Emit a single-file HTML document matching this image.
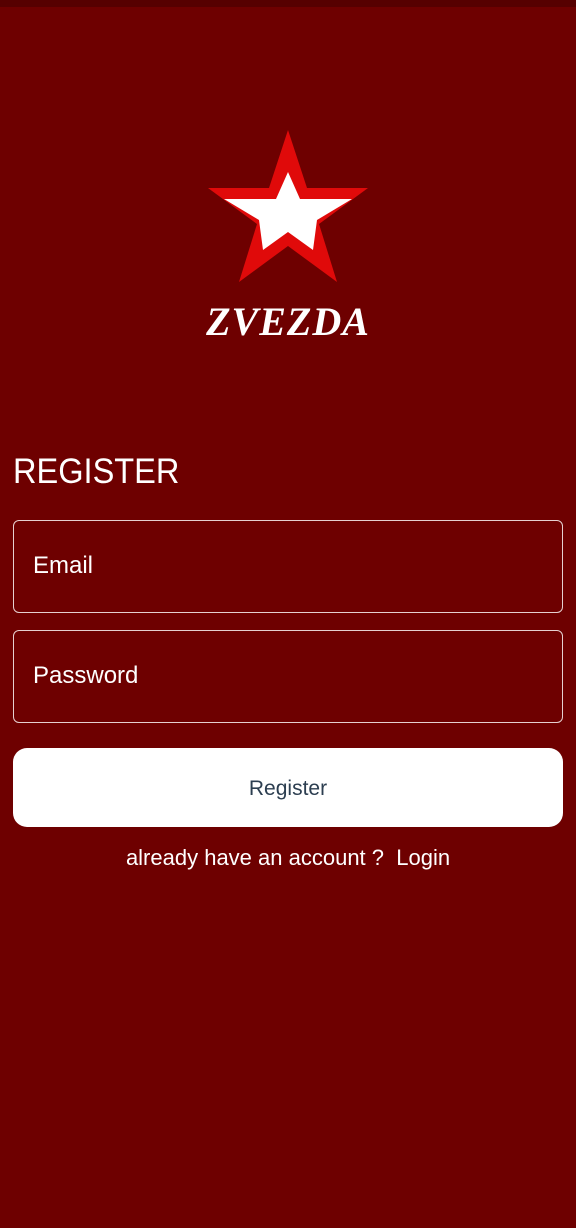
<!DOCTYPE html>
<html><head><meta charset="utf-8"><style>
html,body{margin:0;padding:0}
body{width:576px;height:1228px;background:#6e0000;position:relative;overflow:hidden;font-family:"Liberation Sans","DejaVu Sans",sans-serif;color:#fff}
.top{position:absolute;left:0;top:0;width:576px;height:7px;background:#560000}
.h{position:absolute;left:13px;top:452px;font-size:35px;transform:scaleX(0.93);transform-origin:left}
.in{position:absolute;left:13px;width:550px;border:1px solid #e6d0d0;border-radius:6px;box-sizing:border-box;font-size:24px;line-height:90px;padding-left:19px;height:93px}
.btn{position:absolute;left:13px;top:748px;width:550px;height:79px;background:#fff;border-radius:14px;color:#2c3e50;font-size:21px;text-align:center;line-height:81px}
.lk{position:absolute;left:0;width:576px;top:845px;text-align:center;font-size:22px}
.logo{position:absolute;left:0;top:298px;width:576px;text-align:center;font-family:"Liberation Serif",serif;font-style:italic;font-weight:bold;font-size:40px;letter-spacing:1px}
</style></head><body>
<div class="top"></div>
<svg style="position:absolute;left:0;top:0" width="576" height="300">
<polygon fill="#e00a0a" points="288,130 307,188 368,188 319,224 337,282 288,246 239,282 257,224 208,188 269,188"/>
<polygon fill="#fff" points="288,172 300,199 352,199 317,220 313,250 288,232 263,250 259,220 224,199 276,199"/>
</svg>
<div class="logo">ZVEZDA</div>
<div class="h">REGISTER</div>
<div class="in" style="top:520px">Email</div>
<div class="in" style="top:630px">Password</div>
<div class="btn">Register</div>
<div class="lk">already have an account ?&nbsp;&nbsp;Login</div>
</body></html>
